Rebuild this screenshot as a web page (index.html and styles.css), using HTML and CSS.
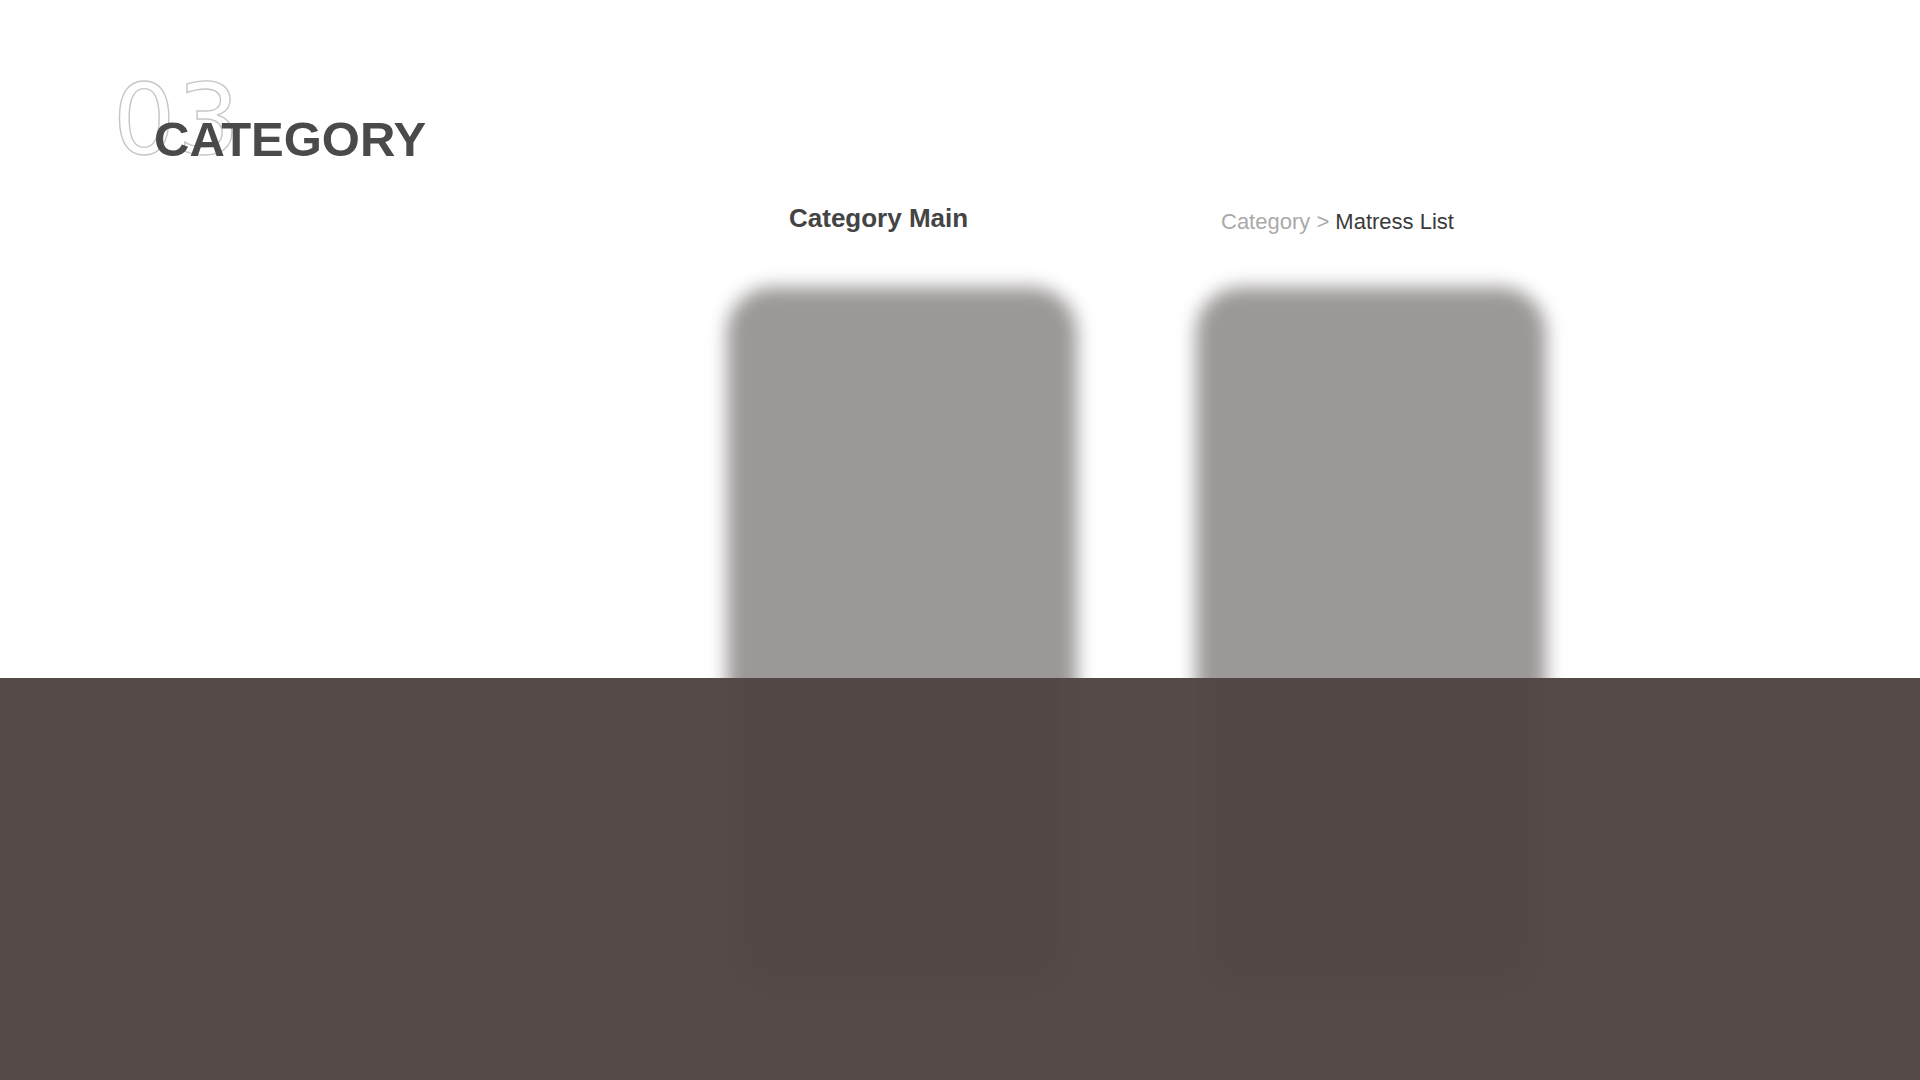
FILE: index.html
```html
<!DOCTYPE html>
<html lang="en">
<head>
<meta charset="utf-8">
<title>Category</title>
<link rel="stylesheet" href="styles.css">
</head>
<body>
<div class="page">
  <header class="head">
    <div class="title">
      <span class="num">03</span>
      <h1 class="name">CATEGORY</h1>
    </div>
  </header>
  <main class="screens">
    <section class="screen screen-main">
      <h2 class="label">Category Main</h2>
      <div class="phone"></div>
    </section>
    <section class="screen screen-list">
      <p class="crumb"><span class="crumb-dim">Category &gt;</span> Matress List</p>
      <div class="phone"></div>
    </section>
  </main>
  <div class="band"></div>
</div>
</body>
</html>
```

FILE: styles.css
```css
* { box-sizing: border-box; }
html, body { margin: 0; padding: 0; background: #ffffff; }
body { font-family: "Liberation Sans", Arial, sans-serif; }

.page {
  position: relative;
  width: 1920px;
  height: 1080px;
  overflow: hidden;
  background: #ffffff;
}

.head {
  padding: 70px 0 0 113px;
}

.title {
  display: grid;
  width: max-content;
  height: 100px;
}

.num {
  grid-area: 1 / 1;
  font-family: "DejaVu Sans", sans-serif;
  font-size: 98px;
  line-height: 100px;
  font-weight: 400;
  letter-spacing: 2px;
  color: transparent;
  -webkit-text-stroke: 1.4px #c6c6c6;
}

.name {
  grid-area: 1 / 1;
  margin: 45px 0 0 41px;
  font-size: 49px;
  line-height: 49px;
  font-weight: 700;
  color: #4a4a4a;
}

.screens {
  display: flex;
  gap: 119px;
  padding-left: 727px;
  margin-top: 22px;
}

.screen {
  width: 350px;
  display: flex;
  flex-direction: column;
}

.label {
  margin: 11px 0 0 62px;
  height: 40px;
  font-size: 26px;
  line-height: 30px;
  font-weight: 700;
  color: #444444;
}

.crumb {
  margin: 17px 0 0 25px;
  height: 33px;
  font-size: 22px;
  line-height: 26px;
  color: #3a3a3a;
  white-space: nowrap;
}

.crumb-dim { color: #aaaaaa; }

.phone {
  margin-top: 44px;
  height: 710px;
  border-radius: 46px;
  background: #9c9897;
  filter: blur(9px);
}

.screen-list .phone { margin-top: 45px; }

.band {
  position: absolute;
  left: 0;
  right: 0;
  top: 678px;
  bottom: 0;
  background: #514745;
  opacity: 0.985;
}
```
